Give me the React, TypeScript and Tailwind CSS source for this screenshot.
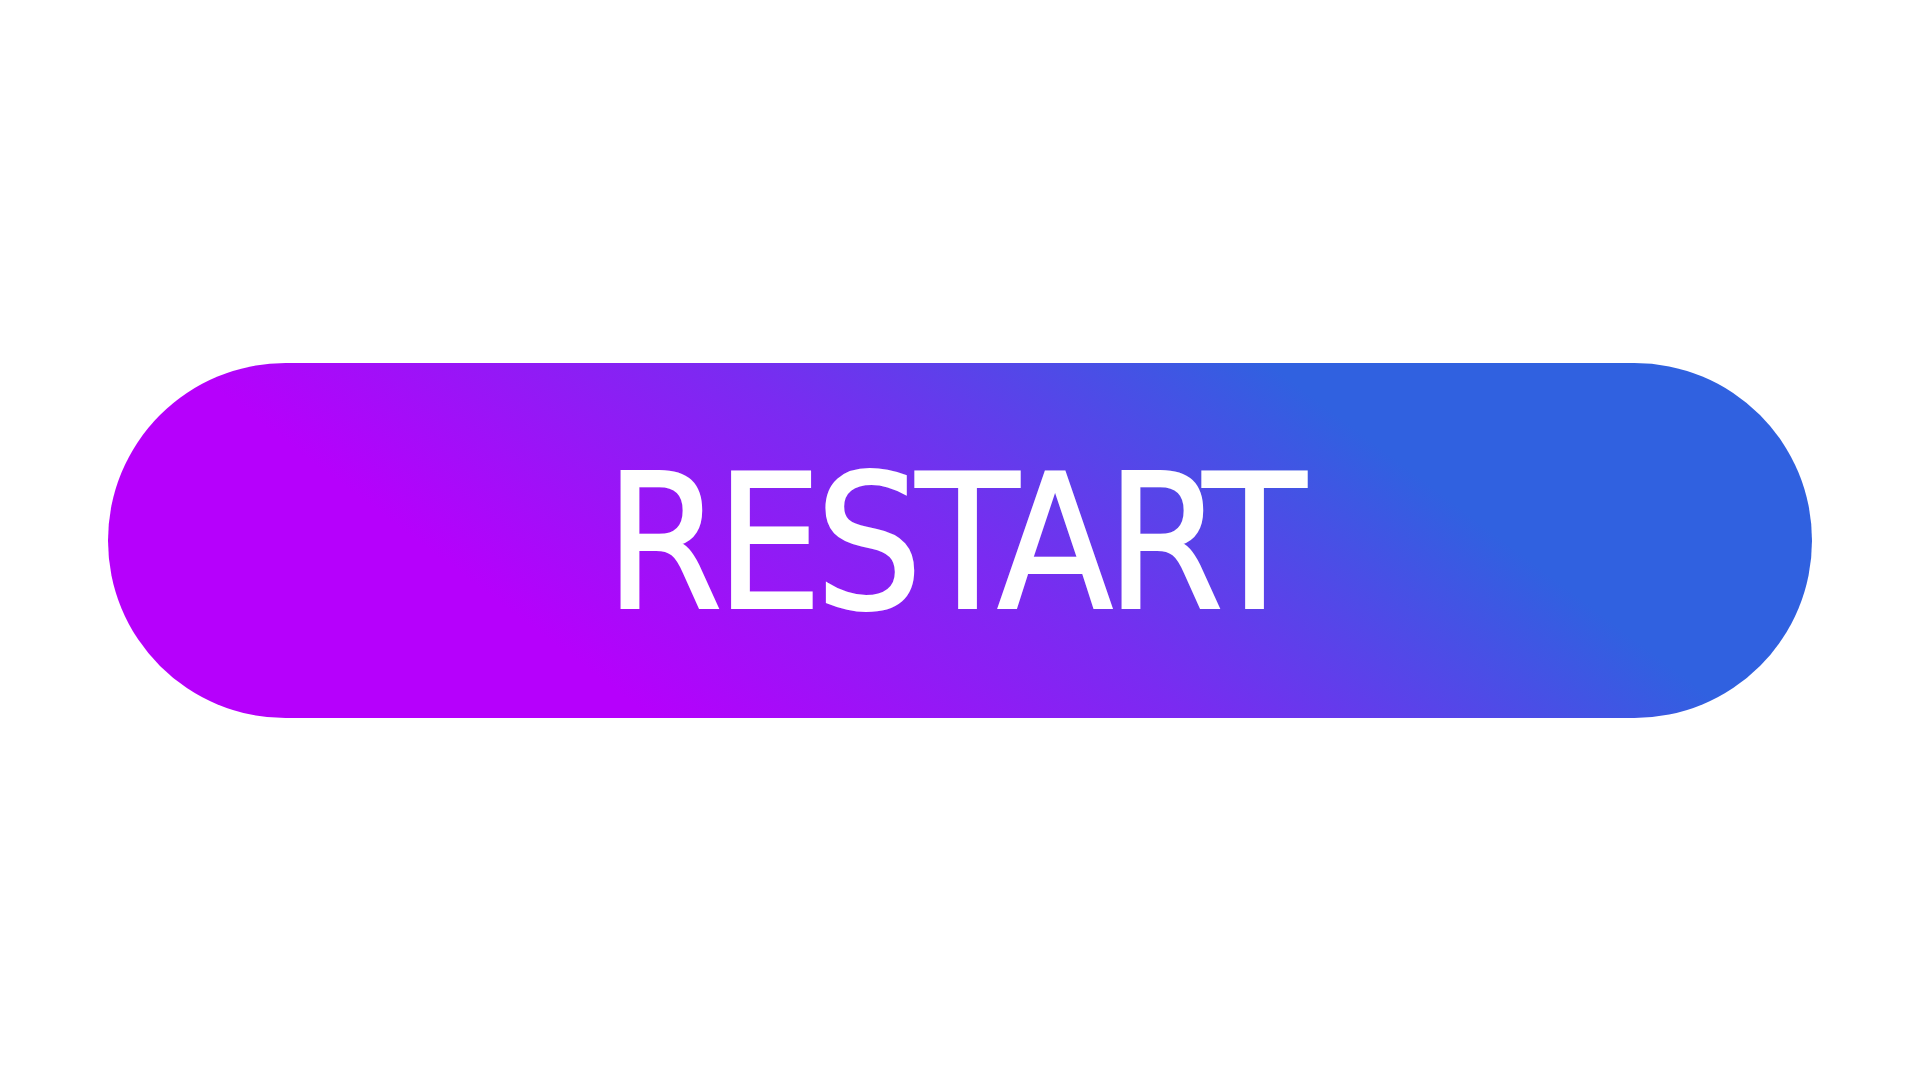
export default function App() {
  return (
    <div className="flex h-screen w-full items-center justify-center bg-white">
      <button
        type="button"
        className="flex h-[355px] w-[1704px] items-center justify-center rounded-full bg-[linear-gradient(37deg,#b600fc_25%,#7a2bf1_50%,#3061e0_75%)]"
      >
        <span className="mt-[6px] mr-[16px] font-['DejaVu_Sans_Condensed','DejaVu_Sans',sans-serif] text-[188px] font-normal leading-none tracking-[-7px] text-white [font-stretch:condensed] [-webkit-text-stroke:2px_white]">
          RESTART
        </span>
      </button>
    </div>
  )
}
